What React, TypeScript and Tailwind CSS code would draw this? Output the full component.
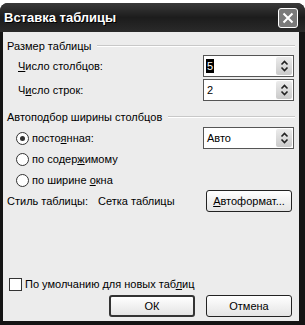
import React from "react";

const font = { fontFamily: '"Liberation Sans", Arial, sans-serif' };

function Spin() {
  return (
    <div className="ml-auto mr-[1px] flex h-[18px] w-[16px] flex-col items-center justify-center rounded-[2px] bg-gradient-to-b from-[#ececec] to-[#cacaca]">
      <svg width="9" height="14" viewBox="0 0 9 14">
        <path d="M1.5 5.5 L4.5 2.5 L7.5 5.5" fill="none" stroke="#222" strokeWidth="1.6" />
        <path d="M1.5 8.5 L4.5 11.5 L7.5 8.5" fill="none" stroke="#222" strokeWidth="1.6" />
      </svg>
    </div>
  );
}

function SpinInput({ children }: { children: React.ReactNode }) {
  return (
    <div className="flex h-[22px] w-[91px] items-center border border-[#555] bg-white pl-[2px]">
      {children}
      <Spin />
    </div>
  );
}

function GroupHeader({ title }: { title: string }) {
  return (
    <div className="flex h-[14px] items-center pl-[4px]">
      <span className="text-black">{title}</span>
      <div className="ml-[6px] mr-[4px] flex-1 border-t border-b border-t-[#c8c8c8] border-b-white" />
    </div>
  );
}

function Radio({ checked }: { checked?: boolean }) {
  return (
    <div className="flex h-[13px] w-[13px] items-center justify-center rounded-full border border-[#333] bg-white">
      {checked && <div className="h-[5px] w-[5px] rounded-full bg-[#333]" />}
    </div>
  );
}

function Btn({ children, def }: { children: React.ReactNode; def?: boolean }) {
  return (
    <div
      className={
        "flex h-[22px] w-[86px] items-center justify-center rounded-[3px] bg-gradient-to-b from-white to-[#e4e4e4] text-black " +
        (def ? "border-2 border-[#333]" : "border border-[#222]")
      }
    >
      {children}
    </div>
  );
}

export default function App() {
  return (
    <div className="h-[325px] w-[305px] overflow-hidden bg-white pt-[3px]" style={font}>
      <div className="flex h-[322px] w-[305px] flex-col rounded-t-[8px] bg-[#141414]">
        {/* Title bar */}
        <div className="flex h-[29px] items-center bg-gradient-to-b from-[#3a3a3a] via-[#1c1c1c] to-[#2a2a2a] rounded-t-[8px] pl-[4px] pr-[7px]">
          <span className="text-[13px] font-bold text-white [text-shadow:1px_1px_0_#000]">
            Вставка таблицы
          </span>
          <div className="ml-auto flex h-[20px] w-[20px] items-center justify-center rounded-[3px] border border-white bg-[#7a7a7a]">
            <svg width="12" height="12" viewBox="0 0 12 12">
              <path d="M1.5 1.5 L10.5 10.5 M10.5 1.5 L1.5 10.5" stroke="white" strokeWidth="2" />
            </svg>
          </div>
        </div>

        {/* Body */}
        <div className="mb-[4px] ml-[3px] mr-[6px] flex flex-1 flex-col bg-[#ececec] pb-[4px] text-[11px] text-black">
          <div className="mt-[7px]">
            <GroupHeader title="Размер таблицы" />
          </div>

          <div className="mt-[2px] flex h-[22px] items-center pl-[15px] pr-[5px]">
            <span>
              <u>Ч</u>исло столбцов:
            </span>
            <div className="ml-auto">
              <SpinInput>
                <span className="bg-black px-[1px] leading-[14px] text-white">5</span>
              </SpinInput>
            </div>
          </div>

          <div className="mt-[2px] flex h-[22px] items-center pl-[15px] pr-[5px]">
            <span>
              Ч<u>и</u>сло строк:
            </span>
            <div className="ml-auto">
              <SpinInput>
                <span className="px-[1px]">2</span>
              </SpinInput>
            </div>
          </div>

          <div className="mt-[9px]">
            <GroupHeader title="Автоподбор ширины столбцов" />
          </div>

          <div className="mt-[3px] flex h-[22px] items-center pl-[13px] pr-[5px]">
            <Radio checked />
            <span className="ml-[3px]">
              посто<u>я</u>нная:
            </span>
            <div className="ml-auto">
              <SpinInput>
                <span className="px-[1px]">Авто</span>
              </SpinInput>
            </div>
          </div>

          <div className="flex h-[20px] items-center pl-[13px]">
            <Radio />
            <span className="ml-[3px]">
              по содер<u>ж</u>имому
            </span>
          </div>

          <div className="mt-[1px] flex h-[20px] items-center pl-[13px]">
            <Radio />
            <span className="ml-[3px]">
              по ширине <u>о</u>кна
            </span>
          </div>

          <div className="flex h-[22px] items-center pl-[4px] pr-[7px]">
            <span>Стиль таблицы:</span>
            <span className="ml-[10px]">Сетка таблицы</span>
            <div className="ml-auto">
              <Btn>
                <u>А</u>втоформат...
              </Btn>
            </div>
          </div>

          <div className="flex-1" />

          <div className="flex h-[14px] items-center pl-[6px]">
            <div className="h-[13px] w-[13px] border border-[#333] bg-white" />
            <span className="ml-[3px]">
              По умолчанию для новых таб<u>л</u>иц
            </span>
          </div>

          <div className="mt-[4px] flex items-center justify-end gap-[11px] pr-[7px]">
            <Btn def>ОК</Btn>
            <Btn>Отмена</Btn>
          </div>
        </div>
      </div>
    </div>
  );
}
